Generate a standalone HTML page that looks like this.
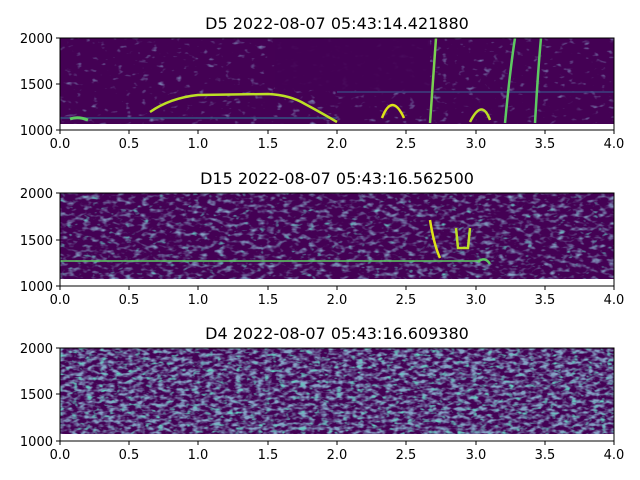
<!DOCTYPE html>
<html><head><meta charset="utf-8"><style>
html,body{margin:0;padding:0;background:#fff;width:640px;height:480px;overflow:hidden}
text{font-family:"DejaVu Sans","Liberation Sans",sans-serif;fill:#000}
</style></head><body>
<svg width="640" height="480" viewBox="0 0 640 480" xmlns="http://www.w3.org/2000/svg">
<defs>
<filter id="n1" x="0" y="0" width="1" height="1"><feTurbulence type="fractalNoise" baseFrequency="0.12 0.22" numOctaves="2" seed="4"/><feColorMatrix type="matrix" values="0 0 0 0 0.23  0 0 0 0 0.32  0 0 0 0 0.55  3 0 0 0 -1.9"/></filter>
<filter id="n2" x="0" y="0" width="1" height="1"><feTurbulence type="fractalNoise" baseFrequency="0.12 0.22" numOctaves="2" seed="7"/><feColorMatrix type="matrix" values="0 0 0 0 0.23  0 0 0 0 0.36  0 0 0 0 0.55  3 0 0 0 -1.5"/></filter>
<filter id="n2b" x="0" y="0" width="1" height="1"><feTurbulence type="fractalNoise" baseFrequency="0.12 0.22" numOctaves="2" seed="9"/><feColorMatrix type="matrix" values="0 0 0 0 0.13  0 0 0 0 0.57  0 0 0 0 0.55  4 0 0 0 -2.6"/></filter>
<filter id="n3" x="0" y="0" width="1" height="1"><feTurbulence type="fractalNoise" baseFrequency="0.14 0.26" numOctaves="2" seed="11"/><feColorMatrix type="matrix" values="0 0 0 0 0.23  0 0 0 0 0.36  0 0 0 0 0.55  3 0 0 0 -1.2"/></filter>
<filter id="n3b" x="0" y="0" width="1" height="1"><feTurbulence type="fractalNoise" baseFrequency="0.14 0.26" numOctaves="2" seed="13"/><feColorMatrix type="matrix" values="0 0 0 0 0.13  0 0 0 0 0.6  0 0 0 0 0.53  4 0 0 0 -2.3"/></filter>
</defs>

<rect x="60" y="38" width="554" height="86" fill="#440154"/>
<rect x="60" y="38" width="554" height="86" filter="url(#n1)"/>
<rect x="275" y="38" width="155" height="52" fill="#440154" opacity="0.9"/>
<path d="M337 92 L614 92" stroke="#3b528b" stroke-width="2" fill="none" opacity="0.6"/>
<path d="M60 118 L337 118" stroke="#31688e" stroke-width="2" fill="none" opacity="0.6"/>
<path d="M70 119 Q78 116 88 120" stroke="#5ec962" stroke-width="3" fill="none"/>
<path d="M150 112 Q170 98 198 95 L268 94 Q290 95 305 104 Q320 112 337 122" stroke="#bddf26" stroke-width="2.5" fill="none"/>
<path d="M430 123 Q433 80 436 38" stroke="#7ad151" stroke-width="2.5" fill="none"/>
<path d="M505 123 Q510 70 515 38" stroke="#5ec962" stroke-width="2.5" fill="none"/>
<path d="M535 123 Q538 70 541 38" stroke="#5ec962" stroke-width="2.5" fill="none"/>
<path d="M382 118 Q392 92 404 118" stroke="#dde318" stroke-width="2.5" fill="none"/>
<path d="M470 122 Q482 98 490 120" stroke="#bddf26" stroke-width="2.5" fill="none"/>
<path d="M60 38 H614 V130 H60 Z" fill="none" stroke="#000" stroke-width="1"/>

<rect x="60" y="193" width="554" height="86" fill="#440154"/>
<rect x="60" y="193" width="554" height="86" filter="url(#n2)"/>
<rect x="60" y="193" width="554" height="86" filter="url(#n2b)"/>
<path d="M60 261 L480 261" stroke="#5ec962" stroke-width="2" fill="none" opacity="0.75"/>
<path d="M430 220 Q434 245 440 258" stroke="#dde318" stroke-width="2.5" fill="none"/>
<path d="M456 228 L458 248 L468 248 L470 228" stroke="#bddf26" stroke-width="2.5" fill="none"/>
<path d="M478 262 Q485 256 490 264" stroke="#5ec962" stroke-width="2.5" fill="none"/>
<path d="M60 193 H614 V286 H60 Z" fill="none" stroke="#000" stroke-width="1"/>

<rect x="60" y="348" width="554" height="86" fill="#440154"/>
<rect x="60" y="348" width="554" height="86" filter="url(#n3)"/>
<rect x="60" y="348" width="554" height="86" filter="url(#n3b)"/>
<path d="M60 348 H614 V441 H60 Z" fill="none" stroke="#000" stroke-width="1"/>

<g font-size="16" text-anchor="middle">
<text x="337" y="29">D5 2022-08-07 05:43:14.421880</text>
<text x="337" y="184">D15 2022-08-07 05:43:16.562500</text>
<text x="337" y="339">D4 2022-08-07 05:43:16.609380</text>
</g>

<g stroke="#000" stroke-width="1">
<path d="M60 130v4M129 130v4M198 130v4M268 130v4M337 130v4M406 130v4M476 130v4M545 130v4M614 130v4"/>
<path d="M60 286v4M129 286v4M198 286v4M268 286v4M337 286v4M406 286v4M476 286v4M545 286v4M614 286v4"/>
<path d="M60 441v4M129 441v4M198 441v4M268 441v4M337 441v4M406 441v4M476 441v4M545 441v4M614 441v4"/>
<path d="M56 38h4M56 84h4M56 130h4M56 193h4M56 240h4M56 286h4M56 348h4M56 394h4M56 441h4"/>
</g>
<g font-size="13" text-anchor="middle">
<g transform="translate(0,148)"><text x="60">0.0</text><text x="129">0.5</text><text x="198">1.0</text><text x="268">1.5</text><text x="337">2.0</text><text x="406">2.5</text><text x="476">3.0</text><text x="545">3.5</text><text x="614">4.0</text></g>
<g transform="translate(0,304)"><text x="60">0.0</text><text x="129">0.5</text><text x="198">1.0</text><text x="268">1.5</text><text x="337">2.0</text><text x="406">2.5</text><text x="476">3.0</text><text x="545">3.5</text><text x="614">4.0</text></g>
<g transform="translate(0,459)"><text x="60">0.0</text><text x="129">0.5</text><text x="198">1.0</text><text x="268">1.5</text><text x="337">2.0</text><text x="406">2.5</text><text x="476">3.0</text><text x="545">3.5</text><text x="614">4.0</text></g>
</g>
<g font-size="13" text-anchor="end">
<text x="53" y="43">2000</text><text x="53" y="89">1500</text><text x="53" y="135">1000</text>
<text x="53" y="198">2000</text><text x="53" y="245">1500</text><text x="53" y="291">1000</text>
<text x="53" y="353">2000</text><text x="53" y="399">1500</text><text x="53" y="446">1000</text>
</g>
</svg>
</body></html>
